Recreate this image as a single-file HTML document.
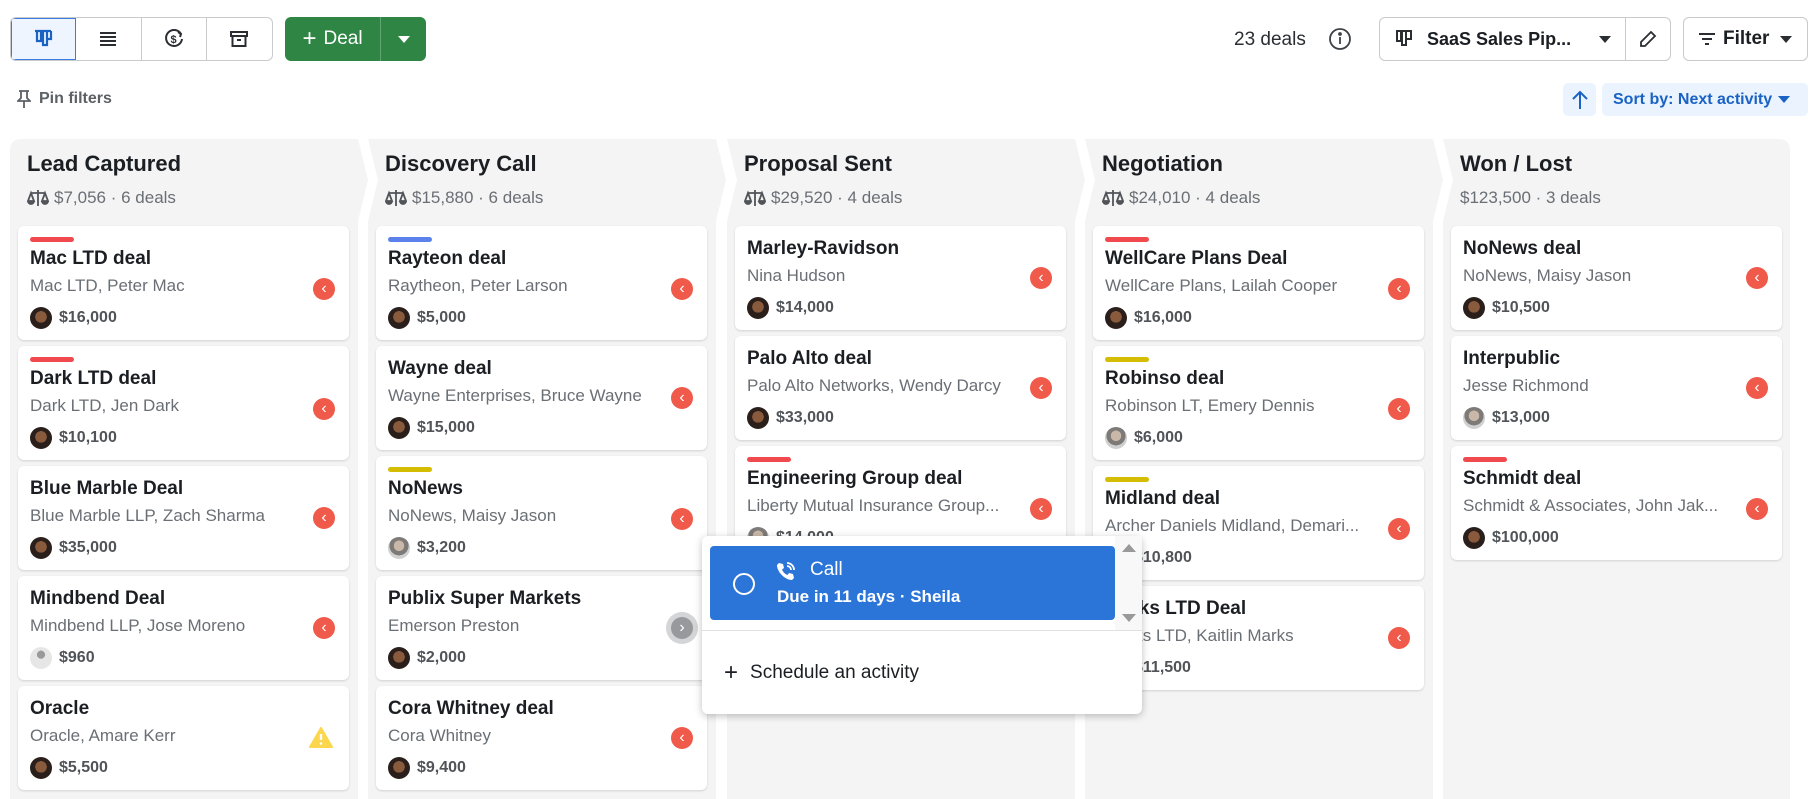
<!DOCTYPE html>
<html><head><meta charset="utf-8"><style>
*{box-sizing:border-box;margin:0;padding:0}
body{width:1812px;height:782px;overflow:hidden;background:#fff;font-family:"Liberation Sans",Arial,sans-serif;color:#1b1f23;position:relative}
.abs{position:absolute}
.seg{position:absolute;top:17px;height:44px;border:1px solid #c8cacc;border-radius:6px;display:flex;overflow:hidden}
.seg div{width:66px;height:100%;display:flex;align-items:center;justify-content:center;border-right:1px solid #c8cacc}
.seg div:last-child{border-right:none}
.panel{position:absolute;top:139px;height:660px;background:#f4f4f4}
.ptitle{position:absolute;left:17px;top:12px;font-size:22px;font-weight:700;color:#1b1f23}
.psub{position:absolute;left:17px;top:49px;font-size:17px;color:#6a6f75;display:flex;align-items:center;gap:5px}
.stack{position:absolute;top:226px;width:331px;display:flex;flex-direction:column;gap:6px}
.card{position:relative;background:#fff;border-radius:6px;box-shadow:0 1px 2px rgba(0,0,0,.15);padding:12px 12px 11px 12px}
.stripe{width:44px;height:5px;border-radius:3px;margin-bottom:6px;margin-top:-1px}
.t{font-size:19px;font-weight:700;line-height:22px;white-space:nowrap}
.s{font-size:17px;color:#6a6f75;line-height:20px;margin-top:6px;white-space:nowrap;overflow:hidden;text-overflow:ellipsis;max-width:265px}
.v{display:flex;align-items:center;gap:7px;margin-top:11px;height:22px;font-size:16px;font-weight:700;color:#505458}
.av{width:22px;height:22px;border-radius:50%;background:radial-gradient(circle at 50% 45%,#8a5a3c 0 35%,#2a1f1a 36%)}
.av.g{background:radial-gradient(circle at 50% 40%,#c9b8a8 0 30%,#7d7a78 31% 55%,#d0d0d0 56%)}
.av.d{background:radial-gradient(circle at 50% 35%,#9a9a9a 0 22%,#e6e6e6 23%);}
.ic{position:absolute;right:14px;width:22px;height:22px;border-radius:50%;background:#f05a4a;color:#fff;display:flex;align-items:center;justify-content:center}
.st .ic{top:52px}.ns .ic{top:41px}
</style></head><body>

<div class="seg" style="left:10px;width:263px">
 <div style="background:#eef5fe;outline:1px solid #3a7be0;outline-offset:-1px"><svg width="22" height="22" viewBox="0 0 22 22" fill="none" stroke="#1a62c4" stroke-width="2.2"><path d="M3 3h16M5 3v10h4V3M11 3v14h4V3M15 3v8h4V3"/></svg></div>
 <div><svg width="20" height="18" viewBox="0 0 20 18" stroke="#2a2e33" stroke-width="2"><path d="M2 3h16M2 7h16M2 11h16M2 15h16"/></svg></div>
 <div><svg width="22" height="22" viewBox="0 0 22 22" fill="none" stroke="#2a2e33" stroke-width="2"><path d="M18 6A8 8 0 1 0 19 11"/><path d="M15 4l3 2-1 3"/><text x="7.5" y="15" font-size="11" font-weight="700" fill="#2a2e33" stroke="none" font-family="Liberation Sans">$</text></svg></div>
 <div><svg width="20" height="20" viewBox="0 0 20 20" fill="none" stroke="#2a2e33" stroke-width="2"><rect x="2" y="3" width="16" height="4"/><path d="M3.5 7v10h13V7M8 11h4"/></svg></div>
</div>
<div class="abs" style="left:285px;top:17px;width:141px;height:44px;background:#2e8544;border-radius:6px;display:flex;color:#fff">
 <div style="width:96px;display:flex;align-items:center;justify-content:center;font-size:19px;border-right:1px solid #5fa574"><span style="font-size:24px;margin-right:7px;font-weight:300">+</span>Deal</div>
 <div style="flex:1;display:flex;align-items:center;justify-content:center"><svg width="12" height="7"><path d="M0 0h12L6 7z" fill="#fff"/></svg></div>
</div>

<div class="abs" style="left:17px;top:90px;display:flex;align-items:center;gap:8px;font-size:16px;font-weight:700;color:#5c6166">
<svg width="14" height="18" viewBox="0 0 14 18" fill="none" stroke="#5c6166" stroke-width="1.8"><path d="M2 1h10M4 1v7L1 11h12l-3-3V1M7 11v7"/></svg>Pin filters</div>

<div class="abs" style="left:1234px;top:29px;font-size:19px;color:#2a2e33">23 deals</div>
<svg class="abs" style="left:1328px;top:27px" width="24" height="24" viewBox="0 0 24 24" fill="none" stroke="#3d4247" stroke-width="1.8"><circle cx="12" cy="12" r="10"/><path d="M12 10v7"/><circle cx="12" cy="7" r="1" fill="#3d4247"/></svg>

<div class="abs" style="left:1379px;top:17px;width:292px;height:44px;border:1px solid #c8cacc;border-radius:6px;display:flex;align-items:center;white-space:nowrap">
 <svg style="margin-left:15px;flex:none" width="18" height="20" viewBox="0 0 18 20" fill="none" stroke="#2a2e33" stroke-width="2"><path d="M1 2h16M2 2v10h4V2M7 2v14h4V2M11 2v8h5V2"/></svg>
 <span style="margin-left:14px;font-size:18px;font-weight:700;width:160px;flex:none">SaaS Sales Pip...</span>
 <svg style="margin-left:12px;flex:none" width="12" height="7"><path d="M0 0h12L6 7z" fill="#2a2e33"/></svg>
 <div style="margin-left:auto;width:45px;height:100%;border-left:1px solid #c8cacc;display:flex;align-items:center;justify-content:center;flex:none"><svg width="20" height="20" viewBox="0 0 20 20" fill="none" stroke="#2a2e33" stroke-width="1.8"><path d="M13 3l4 4-10 10H3v-4z"/></svg></div>
</div>
<div class="abs" style="left:1683px;top:17px;width:125px;height:44px;border:1px solid #c8cacc;border-radius:6px;display:flex;align-items:center">
 <svg style="margin-left:14px" width="18" height="14" viewBox="0 0 18 14" stroke="#2a2e33" stroke-width="2"><path d="M1 2h16M4 7h10M7 12h4"/></svg>
 <span style="margin-left:7px;font-size:19px;font-weight:700">Filter</span>
 <svg style="margin-left:11px" width="12" height="7"><path d="M0 0h12L6 7z" fill="#2a2e33"/></svg>
</div>

<div class="abs" style="left:1563px;top:83px;width:33px;height:33px;background:#eaf3fe;border-radius:5px;display:flex;align-items:center;justify-content:center"><svg width="18" height="20" viewBox="0 0 18 20" fill="none" stroke="#1a62c4" stroke-width="2"><path d="M9 19V2M2 9l7-7 7 7"/></svg></div>
<div class="abs" style="left:1602px;top:83px;width:206px;height:33px;background:#eaf3fe;border-radius:5px;display:flex;align-items:center;padding-left:11px;font-size:16px;font-weight:700;color:#1a62c4">Sort by: Next activity<svg style="margin-left:6px" width="12" height="7"><path d="M0 0h12L6 7z" fill="#1a62c4"/></svg></div>

<!-- panels -->
<div class="panel" style="left:10px;width:358px;border-radius:10px 0 0 0;clip-path:polygon(0 0,348px 0,358px 41px,348px 82px,348px 100%,0 100%)">
 <div class="ptitle">Lead Captured</div>
 <div class="psub"><svg width="22" height="18" viewBox="0 0 22 18" fill="none" stroke="#505458" stroke-width="1.8"><path d="M11 1v16M4 4h14M4 4l-3 8h6zM18 4l-3 8h6z"/><path d="M1 12a3 3 0 0 0 6 0M15 12a3 3 0 0 0 6 0" fill="#505458"/></svg>$7,056 · 6 deals</div>
</div>
<div class="panel" style="left:368px;width:358px;clip-path:polygon(0 0,348px 0,358px 41px,348px 82px,348px 100%,0 100%,0 82px,10px 41px)">
 <div class="ptitle">Discovery Call</div>
 <div class="psub"><svg width="22" height="18" viewBox="0 0 22 18" fill="none" stroke="#505458" stroke-width="1.8"><path d="M11 1v16M4 4h14M4 4l-3 8h6zM18 4l-3 8h6z"/><path d="M1 12a3 3 0 0 0 6 0M15 12a3 3 0 0 0 6 0" fill="#505458"/></svg>$15,880 · 6 deals</div>
</div>
<div class="panel" style="left:727px;width:358px;clip-path:polygon(0 0,348px 0,358px 41px,348px 82px,348px 100%,0 100%,0 82px,10px 41px)">
 <div class="ptitle">Proposal Sent</div>
 <div class="psub"><svg width="22" height="18" viewBox="0 0 22 18" fill="none" stroke="#505458" stroke-width="1.8"><path d="M11 1v16M4 4h14M4 4l-3 8h6zM18 4l-3 8h6z"/><path d="M1 12a3 3 0 0 0 6 0M15 12a3 3 0 0 0 6 0" fill="#505458"/></svg>$29,520 · 4 deals</div>
</div>
<div class="panel" style="left:1085px;width:358px;clip-path:polygon(0 0,348px 0,358px 41px,348px 82px,348px 100%,0 100%,0 82px,10px 41px)">
 <div class="ptitle">Negotiation</div>
 <div class="psub"><svg width="22" height="18" viewBox="0 0 22 18" fill="none" stroke="#505458" stroke-width="1.8"><path d="M11 1v16M4 4h14M4 4l-3 8h6zM18 4l-3 8h6z"/><path d="M1 12a3 3 0 0 0 6 0M15 12a3 3 0 0 0 6 0" fill="#505458"/></svg>$24,010 · 4 deals</div>
</div>
<div class="panel" style="left:1443px;width:347px;border-radius:0 10px 0 0;clip-path:polygon(0 0,347px 0,347px 100%,0 100%,0 82px,10px 41px)">
 <div class="ptitle">Won / Lost</div>
 <div class="psub">$123,500 · 3 deals</div>
</div>

<!-- col1 -->
<div class="stack" style="left:18px">
 <div class="card st"><div class="stripe" style="background:#f04a4f"></div><div class="t">Mac LTD deal</div><div class="s">Mac LTD, Peter Mac</div><div class="v"><div class="av"></div>$16,000</div><div class="ic">‹</div></div>
 <div class="card st"><div class="stripe" style="background:#f04a4f"></div><div class="t">Dark LTD deal</div><div class="s">Dark LTD, Jen Dark</div><div class="v"><div class="av"></div>$10,100</div><div class="ic">‹</div></div>
 <div class="card ns"><div class="t">Blue Marble Deal</div><div class="s">Blue Marble LLP, Zach Sharma</div><div class="v"><div class="av"></div>$35,000</div><div class="ic">‹</div></div>
 <div class="card ns"><div class="t">Mindbend Deal</div><div class="s">Mindbend LLP, Jose Moreno</div><div class="v"><div class="av d"></div>$960</div><div class="ic">‹</div></div>
 <div class="card ns"><div class="t">Oracle</div><div class="s">Oracle, Amare Kerr</div><div class="v"><div class="av"></div>$5,500</div><svg class="abs" style="right:16px;top:41px" width="24" height="21" viewBox="0 0 24 21"><path d="M12 1L23 20H1z" fill="#fcd64c" stroke="#fcd64c" stroke-linejoin="round" stroke-width="2"/><path d="M12 7v6" stroke="#fff" stroke-width="2.4"/><circle cx="12" cy="16.5" r="1.3" fill="#fff"/></svg></div>
</div>
<!-- col2 -->
<div class="stack" style="left:376px">
 <div class="card st"><div class="stripe" style="background:#5b82ec"></div><div class="t">Rayteon deal</div><div class="s">Raytheon, Peter Larson</div><div class="v"><div class="av"></div>$5,000</div><div class="ic">‹</div></div>
 <div class="card ns"><div class="t">Wayne deal</div><div class="s">Wayne Enterprises, Bruce Wayne</div><div class="v"><div class="av"></div>$15,000</div><div class="ic">‹</div></div>
 <div class="card st"><div class="stripe" style="background:#d4bd00"></div><div class="t">NoNews</div><div class="s">NoNews, Maisy Jason</div><div class="v"><div class="av g"></div>$3,200</div><div class="ic">‹</div></div>
 <div class="card ns"><div class="t">Publix Super Markets</div><div class="s">Emerson Preston</div><div class="v"><div class="av"></div>$2,000</div><div class="ic" style="background:#97999c;box-shadow:0 0 0 5px #d4d5d6;top:41px">›</div></div>
 <div class="card ns"><div class="t">Cora Whitney deal</div><div class="s">Cora Whitney</div><div class="v"><div class="av"></div>$9,400</div><div class="ic">‹</div></div>
</div>
<!-- col3 -->
<div class="stack" style="left:735px">
 <div class="card ns"><div class="t">Marley-Ravidson</div><div class="s">Nina Hudson</div><div class="v"><div class="av"></div>$14,000</div><div class="ic">‹</div></div>
 <div class="card ns"><div class="t">Palo Alto deal</div><div class="s">Palo Alto Networks, Wendy Darcy</div><div class="v"><div class="av"></div>$33,000</div><div class="ic">‹</div></div>
 <div class="card st"><div class="stripe" style="background:#f04a4f"></div><div class="t">Engineering Group deal</div><div class="s">Liberty Mutual Insurance Group...</div><div class="v"><div class="av g"></div>$14,000</div><div class="ic">‹</div></div>
</div>
<!-- col4 -->
<div class="stack" style="left:1093px">
 <div class="card st"><div class="stripe" style="background:#f04a4f"></div><div class="t">WellCare Plans Deal</div><div class="s">WellCare Plans, Lailah Cooper</div><div class="v"><div class="av"></div>$16,000</div><div class="ic">‹</div></div>
 <div class="card st"><div class="stripe" style="background:#d4bd00"></div><div class="t">Robinso deal</div><div class="s">Robinson LT, Emery Dennis</div><div class="v"><div class="av g"></div>$6,000</div><div class="ic">‹</div></div>
 <div class="card st"><div class="stripe" style="background:#d4bd00"></div><div class="t">Midland deal</div><div class="s">Archer Daniels Midland, Demari...</div><div class="v"><div class="av"></div>$10,800</div><div class="ic">‹</div></div>
 <div class="card ns"><div class="t">Marks LTD Deal</div><div class="s">Marks LTD, Kaitlin Marks</div><div class="v"><div class="av"></div>$11,500</div><div class="ic">‹</div></div>
</div>
<!-- col5 -->
<div class="stack" style="left:1451px">
 <div class="card ns"><div class="t">NoNews deal</div><div class="s">NoNews, Maisy Jason</div><div class="v"><div class="av"></div>$10,500</div><div class="ic">‹</div></div>
 <div class="card ns"><div class="t">Interpublic</div><div class="s">Jesse Richmond</div><div class="v"><div class="av g"></div>$13,000</div><div class="ic">‹</div></div>
 <div class="card st"><div class="stripe" style="background:#f04a4f"></div><div class="t">Schmidt deal</div><div class="s">Schmidt &amp; Associates, John Jak...</div><div class="v"><div class="av"></div>$100,000</div><div class="ic">‹</div></div>
</div>

<!-- popup -->
<div class="abs" style="left:702px;top:536px;width:440px;height:178px;background:#fff;border-radius:6px;box-shadow:0 2px 8px rgba(0,0,0,.25);z-index:5">
 <div class="abs" style="left:8px;top:10px;width:405px;height:74px;background:#2b74d8;border-radius:4px;color:#fff">
  <div class="abs" style="left:23px;top:27px;width:22px;height:22px;border:2.5px solid #fff;border-radius:50%"></div>
  <svg class="abs" style="left:66px;top:15px" width="20" height="20" viewBox="0 0 20 20" fill="#fff"><path d="M3 2l4 1 1 4-2 1.5c1 2.5 3 4.5 5.5 5.5L13 12l4 1 1 4-2 2C9 19 1 11 1 4z"/><path d="M11 2a7 7 0 0 1 7 7M11 5a4 4 0 0 1 4 4" stroke="#fff" stroke-width="1.8" fill="none"/></svg>
  <div class="abs" style="left:100px;top:13px;font-size:19px">Call</div>
  <div class="abs" style="left:67px;top:41px;font-size:17px;font-weight:700">Due in 11 days · Sheila</div>
 </div>
 <div class="abs" style="left:413px;top:0;width:27px;height:94px;background:#f8f8f8"></div>
 <svg class="abs" style="left:420px;top:8px" width="14" height="8"><path d="M0 8h14L7 0z" fill="#999"/></svg>
 <svg class="abs" style="left:420px;top:78px" width="14" height="8"><path d="M0 0h14L7 8z" fill="#999"/></svg>
 <div class="abs" style="left:0;top:94px;width:440px;border-top:1px solid #e0e0e0"></div>
 <div class="abs" style="left:22px;top:123px;font-size:19px;color:#1b1f23"><span style="font-size:24px;margin-right:12px;vertical-align:-2px">+</span>Schedule an activity</div>
</div>
</body></html>
